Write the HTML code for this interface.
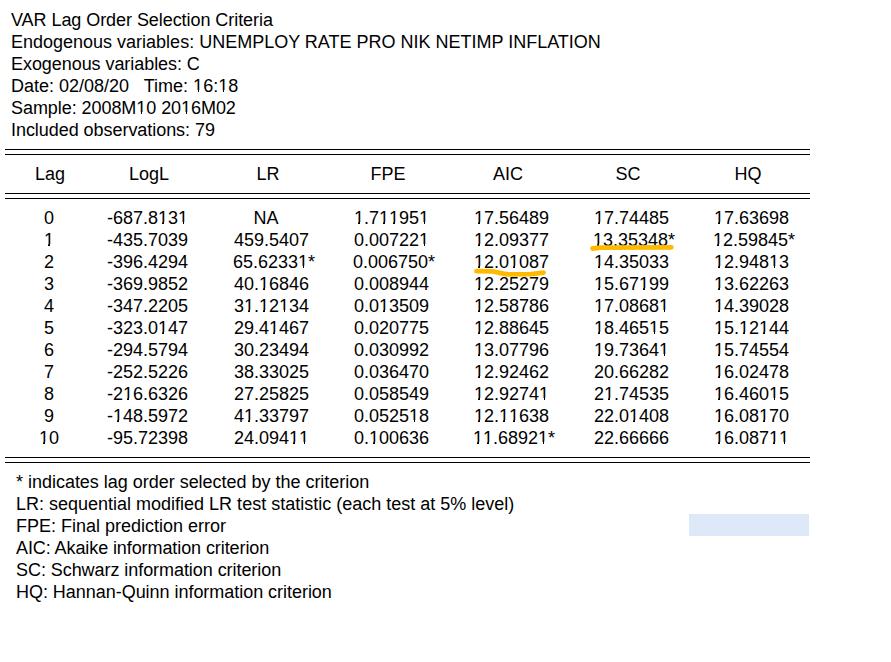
<!DOCTYPE html>
<html><head><meta charset="utf-8"><style>
html,body{margin:0;padding:0;background:#fff;width:891px;height:662px;overflow:hidden;position:relative}
body{font-family:"Liberation Sans",sans-serif;font-size:18px;line-height:22px;color:#000}
.t{position:absolute;white-space:pre}
.c{position:absolute;width:120px;text-align:center;white-space:pre}
.st{}
.o{position:relative}
.o::before,.o::after{content:"";position:absolute;bottom:4px;height:2.3px;background:#fff}
.o::before{left:0.8px;width:3.7px}
.o::after{left:6.15px;width:3.6px}
.ln{position:absolute;height:1px;background:#000}
.sel{position:absolute;left:689px;top:514px;width:120px;height:22px;background:#dde9f9}
.mark{position:absolute}
</style></head><body>
<div class="sel"></div>
<div class="t" style="left:11px;top:9px;letter-spacing:-0.06px">VAR Lag Order Selection Criteria</div>
<div class="t" style="left:11px;top:31px">Endogenous variables: UNEMPLOY RATE PRO NIK NETIMP INFLATION</div>
<div class="t" style="left:11px;top:53px;letter-spacing:-0.06px">Exogenous variables: C</div>
<div class="t" style="left:11px;top:75px">Date: 02/08/20&nbsp;&nbsp; Time: <span class="o">1</span>6:<span class="o">1</span>8</div>
<div class="t" style="left:11px;top:97px;letter-spacing:-0.06px">Sample: 2008M<span class="o">1</span>0 20<span class="o">1</span>6M02</div>
<div class="t" style="left:11px;top:119px;letter-spacing:-0.05px">Included observations: 79</div>
<div class="ln" style="left:5px;top:149px;width:805px"></div>
<div class="ln" style="left:5px;top:154px;width:805px"></div>
<div class="ln" style="left:5px;top:193px;width:805px"></div>
<div class="ln" style="left:5px;top:198px;width:805px"></div>
<div class="ln" style="left:5px;top:457px;width:805px"></div>
<div class="ln" style="left:5px;top:462px;width:805px"></div>
<div class="c" style="left:-10.0px;top:163px">Lag</div>
<div class="c" style="left:89.0px;top:163px">LogL</div>
<div class="c" style="left:208.0px;top:163px">LR</div>
<div class="c" style="left:328.0px;top:163px">FPE</div>
<div class="c" style="left:448.0px;top:163px">AIC</div>
<div class="c" style="left:568.0px;top:163px">SC</div>
<div class="c" style="left:688.0px;top:163px">HQ</div>
<div class="c" style="left:-8.5px;top:207px">0 </div>
<div class="c" style="left:90.0px;top:207px">-687.8<span class="o">1</span>3<span class="o">1</span> </div>
<div class="c" style="left:208.0px;top:207px">NA </div>
<div class="c" style="left:334.0px;top:207px"><span class="o">1</span>.7<span class="o">1</span><span class="o">1</span>95<span class="o">1</span> </div>
<div class="c" style="left:454.0px;top:207px"><span class="o">1</span>7.56489 </div>
<div class="c" style="left:574.0px;top:207px"><span class="o">1</span>7.74485 </div>
<div class="c" style="left:694.0px;top:207px"><span class="o">1</span>7.63698 </div>
<div class="c" style="left:-8.5px;top:229px"><span class="o">1</span> </div>
<div class="c" style="left:90.0px;top:229px">-435.7039 </div>
<div class="c" style="left:214.0px;top:229px">459.5407 </div>
<div class="c" style="left:334.0px;top:229px">0.00722<span class="o">1</span> </div>
<div class="c" style="left:454.0px;top:229px"><span class="o">1</span>2.09377 </div>
<div class="c" style="left:574.0px;top:229px"><span class="o">1</span>3.35348*</div>
<div class="c" style="left:694.0px;top:229px"><span class="o">1</span>2.59845*</div>
<div class="c" style="left:-8.5px;top:251px">2 </div>
<div class="c" style="left:90.0px;top:251px">-396.4294 </div>
<div class="c" style="left:214.0px;top:251px">65.6233<span class="o">1</span>*</div>
<div class="c" style="left:334.0px;top:251px">0.006750*</div>
<div class="c" style="left:454.0px;top:251px"><span class="o">1</span>2.0<span class="o">1</span>087 </div>
<div class="c" style="left:574.0px;top:251px"><span class="o">1</span>4.35033 </div>
<div class="c" style="left:694.0px;top:251px"><span class="o">1</span>2.948<span class="o">1</span>3 </div>
<div class="c" style="left:-8.5px;top:273px">3 </div>
<div class="c" style="left:90.0px;top:273px">-369.9852 </div>
<div class="c" style="left:214.0px;top:273px">40.<span class="o">1</span>6846 </div>
<div class="c" style="left:334.0px;top:273px">0.008944 </div>
<div class="c" style="left:454.0px;top:273px"><span class="o">1</span>2.25279 </div>
<div class="c" style="left:574.0px;top:273px"><span class="o">1</span>5.67<span class="o">1</span>99 </div>
<div class="c" style="left:694.0px;top:273px"><span class="o">1</span>3.62263 </div>
<div class="c" style="left:-8.5px;top:295px">4 </div>
<div class="c" style="left:90.0px;top:295px">-347.2205 </div>
<div class="c" style="left:214.0px;top:295px">3<span class="o">1</span>.<span class="o">1</span>2<span class="o">1</span>34 </div>
<div class="c" style="left:334.0px;top:295px">0.0<span class="o">1</span>3509 </div>
<div class="c" style="left:454.0px;top:295px"><span class="o">1</span>2.58786 </div>
<div class="c" style="left:574.0px;top:295px"><span class="o">1</span>7.0868<span class="o">1</span> </div>
<div class="c" style="left:694.0px;top:295px"><span class="o">1</span>4.39028 </div>
<div class="c" style="left:-8.5px;top:317px">5 </div>
<div class="c" style="left:90.0px;top:317px">-323.0<span class="o">1</span>47 </div>
<div class="c" style="left:214.0px;top:317px">29.4<span class="o">1</span>467 </div>
<div class="c" style="left:334.0px;top:317px">0.020775 </div>
<div class="c" style="left:454.0px;top:317px"><span class="o">1</span>2.88645 </div>
<div class="c" style="left:574.0px;top:317px"><span class="o">1</span>8.465<span class="o">1</span>5 </div>
<div class="c" style="left:694.0px;top:317px"><span class="o">1</span>5.<span class="o">1</span>2<span class="o">1</span>44 </div>
<div class="c" style="left:-8.5px;top:339px">6 </div>
<div class="c" style="left:90.0px;top:339px">-294.5794 </div>
<div class="c" style="left:214.0px;top:339px">30.23494 </div>
<div class="c" style="left:334.0px;top:339px">0.030992 </div>
<div class="c" style="left:454.0px;top:339px"><span class="o">1</span>3.07796 </div>
<div class="c" style="left:574.0px;top:339px"><span class="o">1</span>9.7364<span class="o">1</span> </div>
<div class="c" style="left:694.0px;top:339px"><span class="o">1</span>5.74554 </div>
<div class="c" style="left:-8.5px;top:361px">7 </div>
<div class="c" style="left:90.0px;top:361px">-252.5226 </div>
<div class="c" style="left:214.0px;top:361px">38.33025 </div>
<div class="c" style="left:334.0px;top:361px">0.036470 </div>
<div class="c" style="left:454.0px;top:361px"><span class="o">1</span>2.92462 </div>
<div class="c" style="left:574.0px;top:361px">20.66282 </div>
<div class="c" style="left:694.0px;top:361px"><span class="o">1</span>6.02478 </div>
<div class="c" style="left:-8.5px;top:383px">8 </div>
<div class="c" style="left:90.0px;top:383px">-2<span class="o">1</span>6.6326 </div>
<div class="c" style="left:214.0px;top:383px">27.25825 </div>
<div class="c" style="left:334.0px;top:383px">0.058549 </div>
<div class="c" style="left:454.0px;top:383px"><span class="o">1</span>2.9274<span class="o">1</span> </div>
<div class="c" style="left:574.0px;top:383px">2<span class="o">1</span>.74535 </div>
<div class="c" style="left:694.0px;top:383px"><span class="o">1</span>6.460<span class="o">1</span>5 </div>
<div class="c" style="left:-8.5px;top:405px">9 </div>
<div class="c" style="left:90.0px;top:405px">-<span class="o">1</span>48.5972 </div>
<div class="c" style="left:214.0px;top:405px">4<span class="o">1</span>.33797 </div>
<div class="c" style="left:334.0px;top:405px">0.0525<span class="o">1</span>8 </div>
<div class="c" style="left:454.0px;top:405px"><span class="o">1</span>2.<span class="o">1</span><span class="o">1</span>638 </div>
<div class="c" style="left:574.0px;top:405px">22.0<span class="o">1</span>408 </div>
<div class="c" style="left:694.0px;top:405px"><span class="o">1</span>6.08<span class="o">1</span>70 </div>
<div class="c" style="left:-8.5px;top:427px"><span class="o">1</span>0 </div>
<div class="c" style="left:90.0px;top:427px">-95.72398 </div>
<div class="c" style="left:214.0px;top:427px">24.094<span class="o">1</span><span class="o">1</span> </div>
<div class="c" style="left:334.0px;top:427px">0.<span class="o">1</span>00636 </div>
<div class="c" style="left:454.0px;top:427px"><span class="o">1</span><span class="o">1</span>.6892<span class="o">1</span>*</div>
<div class="c" style="left:574.0px;top:427px">22.66666 </div>
<div class="c" style="left:694.0px;top:427px"><span class="o">1</span>6.087<span class="o">1</span><span class="o">1</span> </div>
<div class="t" style="left:16px;top:471px;letter-spacing:-0.02px">* indicates lag order selected by the criterion</div>
<div class="t" style="left:16px;top:493px">LR: sequential modified LR test statistic (each test at 5% level)</div>
<div class="t" style="left:16px;top:515px">FPE: Final prediction error</div>
<div class="t" style="left:16px;top:537px;letter-spacing:-0.09px">AIC: Akaike information criterion</div>
<div class="t" style="left:16px;top:559px;letter-spacing:-0.06px">SC: Schwarz information criterion</div>
<div class="t" style="left:16px;top:581px;letter-spacing:-0.035px">HQ: Hannan-Quinn information criterion</div>
<svg class="mark" style="left:0;top:0" width="891" height="662" viewBox="0 0 891 662">
<path d="M592.5 248.5 L600 247.6 L671.3 247.3" stroke="#ffba00" stroke-width="4.8" fill="none" stroke-linecap="round" stroke-linejoin="round"/>
<path d="M476.5 271.2 L492 271.4 C498 271.7 502 274.2 508 274.3 L531 274.1 C536 273.9 540 273.1 543.5 272.6" stroke="#ffba00" stroke-width="4.8" fill="none" stroke-linecap="round" stroke-linejoin="round"/>
</svg>
</body></html>
